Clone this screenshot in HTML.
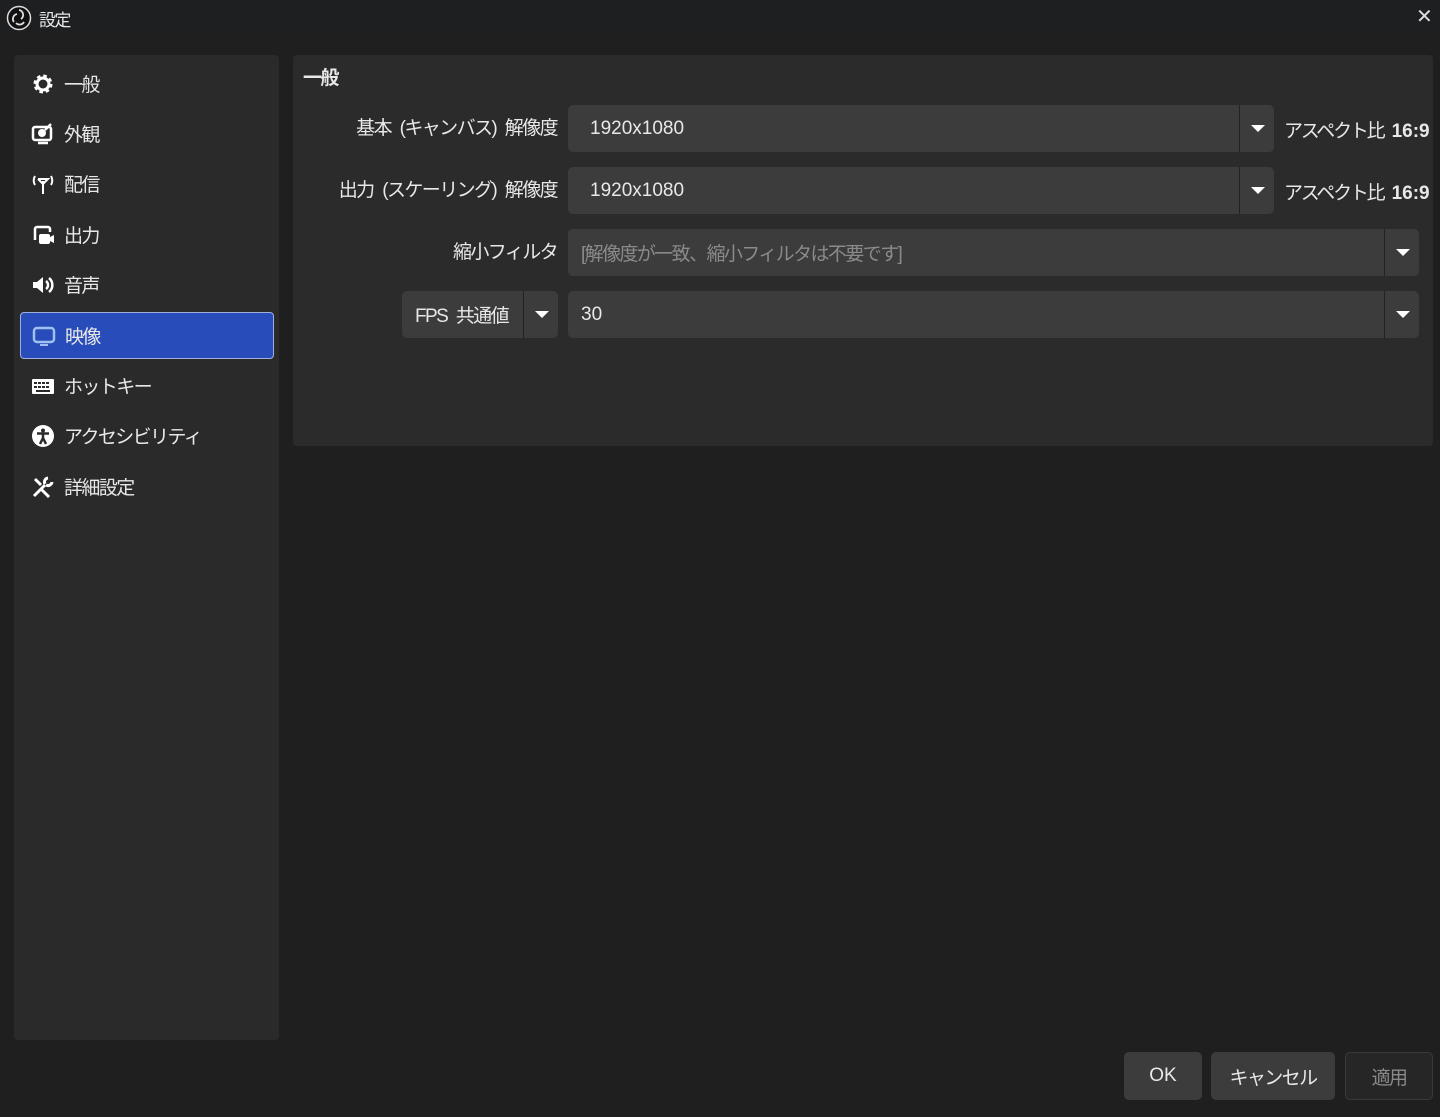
<!DOCTYPE html>
<html><head><meta charset="utf-8"><style>
*{box-sizing:border-box;margin:0;padding:0}
body{width:1440px;height:1117px;background:#1f1f1f;font-family:"Liberation Sans","Noto Sans CJK JP",sans-serif;color:#e8e8e8;position:relative;overflow:hidden;font-size:19px;letter-spacing:-1.6px;word-spacing:5px}
.n{letter-spacing:0}
.abs{position:absolute}
.title{left:0;top:0;width:1440px;height:36px;background:#1d1f21}
.side{left:14px;top:55px;width:265px;height:985px;background:#2a2a2a;border-radius:4px}
.item{position:absolute;left:6px;width:254px;height:47px;display:flex;align-items:center;padding-left:11px}
.item svg{width:24px;height:24px;margin-right:9px}
.sel{background:#284cb9;border:1px solid #9fb0e0;border-radius:4px}
.main{left:293px;top:55px;width:1140px;height:391px;background:#2b2b2b;border-radius:4px}
.lbl{position:absolute;text-align:right;width:300px}
.box{position:absolute;background:#3c3c3c;border-radius:5px;height:47px;display:flex;align-items:center}
.dd{position:absolute;right:0;top:0;width:35px;height:47px;border-left:1px solid #222}
.dd:after{content:"";position:absolute;left:11px;top:20px;border-left:7px solid transparent;border-right:7px solid transparent;border-top:7px solid #fff}
.btn{position:absolute;top:1052px;height:48px;background:#3c3c3c;border-radius:5px;display:flex;align-items:center;justify-content:center}
</style></head><body>
<div class="abs title">
<svg class="abs" style="left:6px;top:5px" width="26" height="26" viewBox="0 0 26 26"><circle cx="13" cy="13" r="11.5" fill="#111" stroke="#ddd" stroke-width="1.5"/><path d="M13 5a5 5 0 0 1 2 9M8 17a5 5 0 0 1 3-8M18 17a5 5 0 0 1-8 1" stroke="#ddd" stroke-width="1.8" fill="none"/></svg>
<div class="abs" style="left:39px;top:6px;font-size:17px">設定</div>
<div class="abs" style="left:1416px;top:4px;font-size:20px;color:#ddd">✕</div>
</div>
<div class="abs side">
<div class="item" style="top:5px"><svg viewBox="0 0 24 24"><circle cx="12" cy="12" r="7" fill="none" stroke="#fff" stroke-width="5" stroke-dasharray="3 2.5"/><circle cx="12" cy="12" r="6" fill="none" stroke="#fff" stroke-width="3"/></svg>一般</div>
<div class="item" style="top:55px"><svg viewBox="0 0 24 24"><rect x="2" y="5" width="18" height="13" rx="2" fill="none" stroke="#fff" stroke-width="2.5"/><circle cx="11" cy="11" r="4" fill="#fff"/><path d="M7 21h10M14 8l6-6" stroke="#fff" stroke-width="2.5"/></svg>外観</div>
<div class="item" style="top:105px"><svg viewBox="0 0 24 24"><path d="M12 9v13M7 7l5 5 5-5H7M4 4a9 9 0 0 0 0 9M20 4a9 9 0 0 1 0 9" stroke="#fff" stroke-width="2" fill="none"/></svg>配信</div>
<div class="item" style="top:156px"><svg viewBox="0 0 24 24"><path d="M4 17V6a2 2 0 0 1 2-2h11a2 2 0 0 1 2 2v3" stroke="#fff" stroke-width="2.5" fill="none"/><rect x="8" y="11" width="11" height="10" rx="2" fill="#fff"/><path d="M19 14l4-2v8l-4-2z" fill="#fff"/></svg>出力</div>
<div class="item" style="top:206px"><svg viewBox="0 0 24 24"><path d="M2 9h4l6-5v16l-6-5H2z" fill="#fff"/><path d="M15 8a5 5 0 0 1 0 8M18 5a9 9 0 0 1 0 14" stroke="#fff" stroke-width="2.5" fill="none"/></svg>音声</div>
<div class="item sel" style="top:257px"><svg viewBox="0 0 24 24"><rect x="2" y="4" width="20" height="14" rx="3" fill="none" stroke="#9ec1f0" stroke-width="2.5"/><path d="M8 21h8" stroke="#9ec1f0" stroke-width="2"/></svg>映像</div>
<div class="item" style="top:307px"><svg viewBox="0 0 24 24"><rect x="1" y="5" width="22" height="15" rx="1" fill="#fff"/><g fill="#2a2a2a"><rect x="3" y="8" width="3" height="2"/><rect x="7" y="8" width="3" height="2"/><rect x="11" y="8" width="3" height="2"/><rect x="15" y="8" width="3" height="2"/><rect x="3" y="12" width="3" height="2"/><rect x="7" y="12" width="3" height="2"/><rect x="11" y="12" width="3" height="2"/><rect x="15" y="12" width="3" height="2"/><rect x="5" y="16" width="14" height="2"/></g></svg>ホットキー</div>
<div class="item" style="top:357px"><svg viewBox="0 0 24 24"><circle cx="12" cy="12" r="11" fill="#fff"/><circle cx="12" cy="6.5" r="2" fill="#2a2a2a"/><path d="M6 9.5h12M12 10v4l-3 6M12 14l3 6" stroke="#2a2a2a" stroke-width="2.5" fill="none"/></svg>アクセシビリティ</div>
<div class="item" style="top:408px"><svg viewBox="0 0 24 24"><path d="M3 21L14 10M10 14l8 8M4 4l6 6M17 3a4 4 0 0 0-3 6M21 7a4 4 0 0 1-6 3" stroke="#fff" stroke-width="3" fill="none"/></svg>詳細設定</div>
</div>
<div class="abs main">
<div class="abs" style="left:10px;top:8px;font-weight:bold;font-size:19px">一般</div>
</div>
<div class="lbl" style="left:257px;top:113px">基本 (キャンバス) 解像度</div>
<div class="box n" style="left:568px;top:105px;width:706px;padding-left:22px">1920x1080<div class="dd"></div></div>
<div class="abs" style="left:1284px;top:116px;letter-spacing:-2.2px">アスペクト比 <b class="n">16:9</b></div>
<div class="lbl" style="left:257px;top:175px">出力 (スケーリング) 解像度</div>
<div class="box n" style="left:568px;top:167px;width:706px;padding-left:22px">1920x1080<div class="dd"></div></div>
<div class="abs" style="left:1284px;top:178px;letter-spacing:-2.2px">アスペクト比 <b class="n">16:9</b></div>
<div class="lbl" style="left:257px;top:237px">縮小フィルタ</div>
<div class="box" style="left:568px;top:229px;width:851px;padding-left:13px;color:#8a8a8a">[解像度が一致、縮小フィルタは不要です]<div class="dd"></div></div>
<div class="box" style="left:402px;top:291px;width:156px;padding-left:13px">FPS 共通値<div class="dd"></div></div>
<div class="box n" style="left:568px;top:291px;width:851px;padding-left:13px">30<div class="dd"></div></div>
<div class="btn n" style="left:1124px;width:78px">OK</div>
<div class="btn" style="left:1211px;width:124px">キャンセル</div>
<div class="btn" style="left:1345px;width:88px;background:#262626;border:1px solid #3a3a3a;color:#8a8a8a">適用</div>
</body></html>
